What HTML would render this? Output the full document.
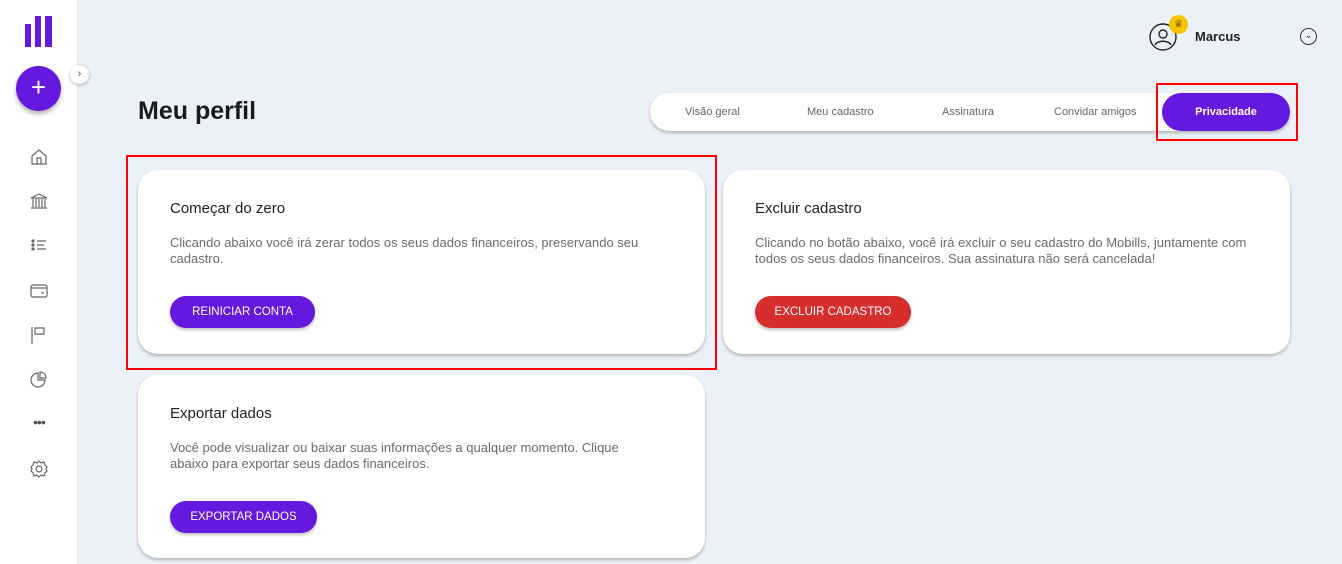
<!DOCTYPE html>
<html><head><meta charset="utf-8"><style>
*{margin:0;padding:0;box-sizing:border-box}
body{width:1342px;height:564px;overflow:hidden;background:#ebf1f9;font-family:"Liberation Sans",sans-serif;position:relative}
.side{position:absolute;left:0;top:0;width:78px;height:564px;background:#fff;border-right:1px solid #e3e6ec}
.abs{position:absolute}
.card{position:absolute;background:#fff;border-radius:20px;box-shadow:0 2px 3px rgba(0,0,0,.25)}
.card h3{position:absolute;left:32px;top:30px;font-size:15px;font-weight:normal;color:#222}
.card p{position:absolute;left:32px;top:65px;width:470px;font-size:13px;line-height:15.5px;color:#6b6b6b}
.btn{position:absolute;left:32px;top:126px;height:32px;border-radius:16px;color:#fff;font-size:11.5px;text-align:center;line-height:33px;box-shadow:0 2px 3px rgba(0,0,0,.25)}
.ic{position:absolute;left:28px;width:22px;height:22px}
.tab{position:absolute;top:106px;font-size:11px;color:#666}
</style></head><body>
<div class="side">
  <div class="abs" style="left:25px;top:24px;width:6px;height:23px;background:#6518de"></div>
  <div class="abs" style="left:35px;top:16px;width:6px;height:31px;background:#6518de"></div>
  <div class="abs" style="left:45px;top:16px;width:7px;height:31px;background:#6518de"></div>
  <div class="abs" style="left:16px;top:66px;width:45px;height:45px;border-radius:50%;background:#6518de;box-shadow:0 3px 5px rgba(0,0,0,.3);color:#fff;font-size:26px;text-align:center;line-height:43px">+</div>
  <svg class="ic" style="top:146px" viewBox="0 0 22 22" fill="none" stroke="#666" stroke-width="1.2"><path d="M4 10 L11 4 L18 10 V18 H4 Z M9 18 V12 H13 V18"/></svg>
  <svg class="ic" style="top:190px" viewBox="0 0 22 22" fill="none" stroke="#666" stroke-width="1.2"><path d="M3 8 L11 4 L19 8 Z M5 9 V17 M8 9 V17 M11 9 V17 M14 9 V17 M17 9 V17 M3 18 H19"/></svg>
  <svg class="ic" style="top:234px" viewBox="0 0 22 22" fill="none" stroke="#666" stroke-width="1.2"><path d="M9 7 H18 M9 11 H16 M9 15 H18"/><circle cx="5" cy="7" r="1" fill="#666"/><circle cx="5" cy="11" r="1" fill="#666"/><circle cx="5" cy="15" r="1" fill="#666"/></svg>
  <svg class="ic" style="top:280px" viewBox="0 0 22 22" fill="none" stroke="#666" stroke-width="1.2"><rect x="3" y="5" width="16" height="12" rx="2"/><path d="M3 8 H19 M13 13 H16"/></svg>
  <svg class="ic" style="top:324px" viewBox="0 0 22 22" fill="none" stroke="#666" stroke-width="1.2"><path d="M4 3 V20 M7 4 H16 V10 H7 Z"/></svg>
  <svg class="ic" style="top:368px" viewBox="0 0 22 22" fill="none" stroke="#666" stroke-width="1.2"><path d="M10 5 A7 7 0 1 0 17 12 H10 Z M12 4 A6 6 0 0 1 18 10 H12 Z"/></svg>
  <div class="abs" style="left:28px;top:414px;width:22px;text-align:center;font-size:14px;color:#555;letter-spacing:-1px">•••</div>
  <svg class="ic" style="top:458px" viewBox="0 0 22 22" fill="none" stroke="#666" stroke-width="1.2"><circle cx="11" cy="11" r="3"/><path d="M11 3 L13 5 L16 4 L17 7 L19 9 L18 11 L19 13 L17 15 L16 18 L13 17 L11 19 L9 17 L6 18 L5 15 L3 13 L4 11 L3 9 L5 7 L6 4 L9 5 Z"/></svg>
</div>
<div class="abs" style="left:70px;top:65px;width:19px;height:19px;border-radius:50%;background:#fff;box-shadow:0 1px 3px rgba(0,0,0,.3);font-size:11px;color:#555;text-align:center;line-height:18px">›</div>

<svg class="abs" style="left:1148px;top:22px" width="30" height="30" viewBox="0 0 30 30" fill="none" stroke="#222" stroke-width="1.4"><circle cx="15" cy="15" r="13"/><circle cx="15" cy="12" r="4"/><path d="M7 23 C9 18 21 18 23 23"/></svg>
<div class="abs" style="left:1169px;top:15px;width:19px;height:19px;border-radius:50%;background:#f7c600;color:#8a5a00;font-size:10px;text-align:center;line-height:19px">♛</div>
<div class="abs" style="left:1195px;top:29px;font-size:13px;font-weight:bold;color:#222">Marcus</div>
<div class="abs" style="left:1300px;top:28px;width:17px;height:17px;border-radius:50%;border:1.3px solid #333;font-size:9px;text-align:center;line-height:13px;color:#333">⌄</div>

<div class="abs" style="left:138px;top:97px;font-size:25px;font-weight:bold;color:#1a1a1a">Meu perfil</div>
<div class="abs" style="left:650px;top:93px;width:640px;height:38px;border-radius:19px;background:#fff;box-shadow:0 2px 3px rgba(0,0,0,.25)"></div>
<div class="tab" style="left:685px">Visão geral</div>
<div class="tab" style="left:807px">Meu cadastro</div>
<div class="tab" style="left:942px">Assinatura</div>
<div class="tab" style="left:1054px">Convidar amigos</div>
<div class="abs" style="left:1162px;top:93px;width:128px;height:38px;border-radius:19px;background:#6518de;color:#fff;font-size:11px;font-weight:bold;text-align:center;line-height:38px">Privacidade</div>
<div class="abs" style="left:1156px;top:83px;width:142px;height:58px;border:2px solid #f00"></div>

<div class="card" style="left:138px;top:170px;width:567px;height:184px">
  <h3>Começar do zero</h3>
  <p>Clicando abaixo você irá zerar todos os seus dados financeiros, preservando seu cadastro.</p>
  <div class="btn" style="width:145px;background:#6518de">REINICIAR CONTA</div>
</div>
<div class="card" style="left:723px;top:170px;width:567px;height:184px">
  <h3>Excluir cadastro</h3>
  <p style="width:500px">Clicando no botão abaixo, você irá excluir o seu cadastro do Mobills, juntamente com todos os seus dados financeiros. Sua assinatura não será cancelada!</p>
  <div class="btn" style="width:156px;background:#d62d2d">EXCLUIR CADASTRO</div>
</div>
<div class="card" style="left:138px;top:375px;width:567px;height:183px">
  <h3>Exportar dados</h3>
  <p style="width:470px">Você pode visualizar ou baixar suas informações a qualquer momento. Clique abaixo para exportar seus dados financeiros.</p>
  <div class="btn" style="width:147px;background:#6518de">EXPORTAR DADOS</div>
</div>
<div class="abs" style="left:126px;top:155px;width:591px;height:215px;border:2px solid #f00"></div>
</body></html>
